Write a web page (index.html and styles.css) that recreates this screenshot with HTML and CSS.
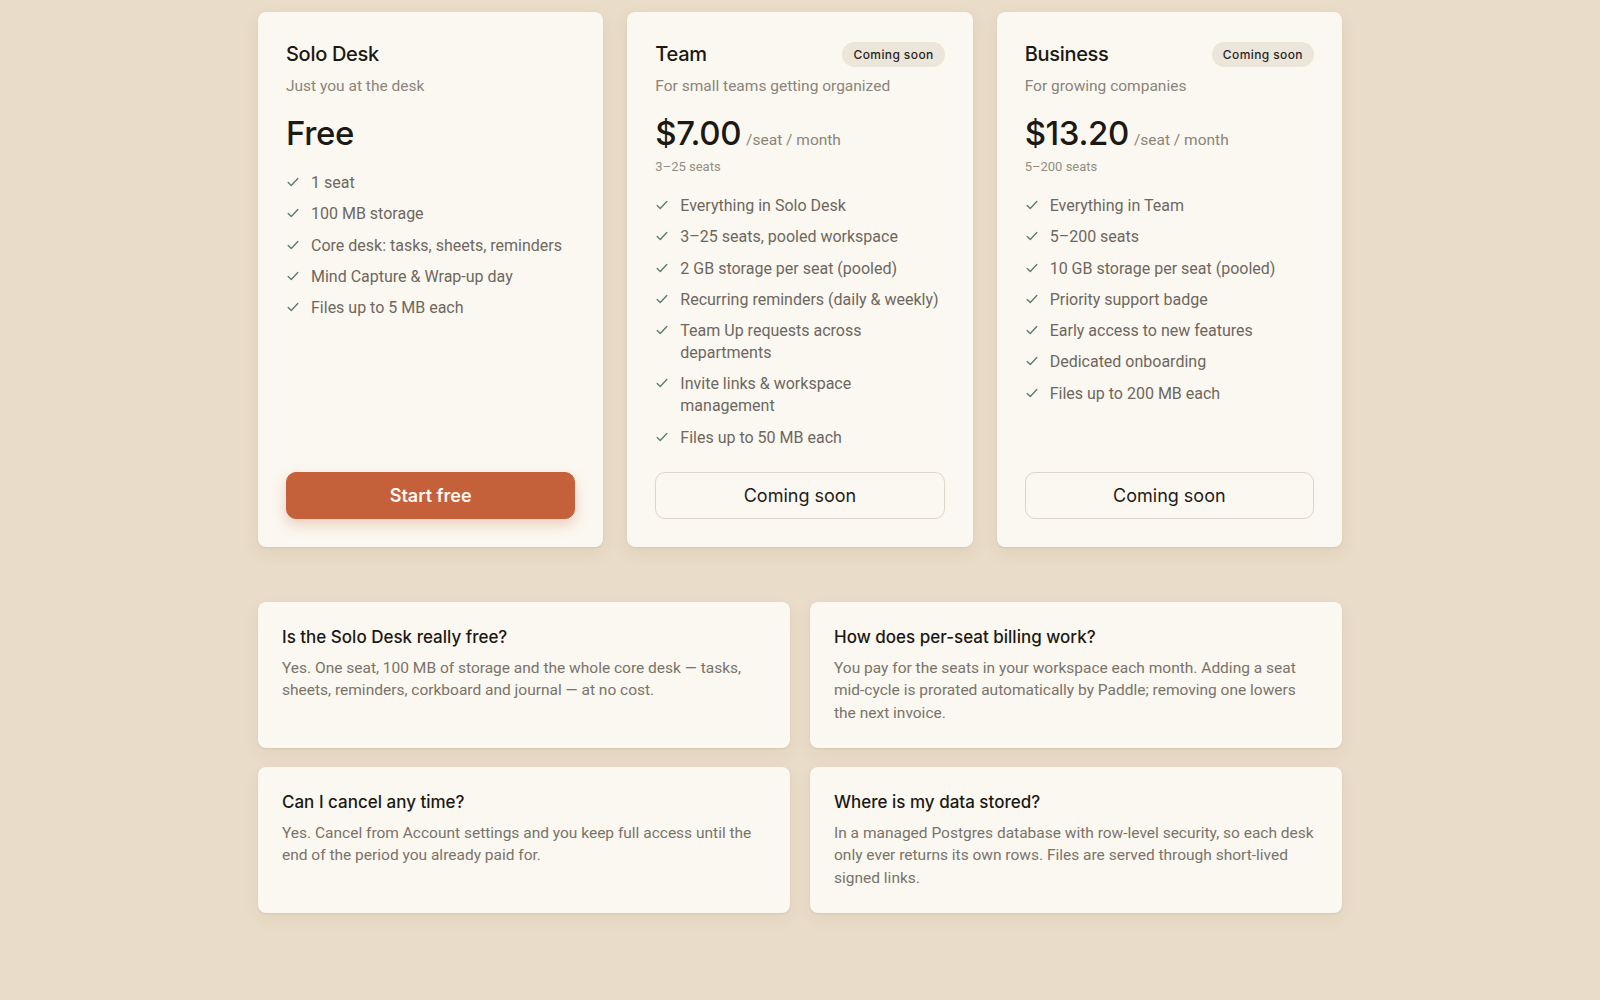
FILE: index.html
```html
<!DOCTYPE html>
<html lang="en">
<head>
    <meta charset="UTF-8">
    <meta name="viewport" content="width=device-width, initial-scale=1.0">
    <title>Pricing</title>
    <link rel="stylesheet" href="styles.css">
</head>
<body>
    <main class="page">
        <section class="plans">
            <div class="plan">
                <div class="plan-head">
                    <h2 class="plan-name">Solo Desk</h2>
                </div>
                <p class="plan-tagline">Just you at the desk</p>
                <div class="price-row">
                    <span class="price">Free</span>
                </div>
                <ul class="features">
                    <li><svg class="check" viewBox="0 0 16 16"><path d="M2.5 8.5l3.5 3.5 7.5-8"/></svg>1 seat</li>
                    <li><svg class="check" viewBox="0 0 16 16"><path d="M2.5 8.5l3.5 3.5 7.5-8"/></svg>100 MB storage</li>
                    <li><svg class="check" viewBox="0 0 16 16"><path d="M2.5 8.5l3.5 3.5 7.5-8"/></svg>Core desk: tasks, sheets, reminders</li>
                    <li><svg class="check" viewBox="0 0 16 16"><path d="M2.5 8.5l3.5 3.5 7.5-8"/></svg>Mind Capture &amp; Wrap-up day</li>
                    <li><svg class="check" viewBox="0 0 16 16"><path d="M2.5 8.5l3.5 3.5 7.5-8"/></svg>Files up to 5 MB each</li>
                </ul>
                <button class="plan-btn primary">Start free</button>
            </div>

            <div class="plan">
                <div class="plan-head">
                    <h2 class="plan-name">Team</h2>
                    <span class="badge">Coming soon</span>
                </div>
                <p class="plan-tagline">For small teams getting organized</p>
                <div class="price-row">
                    <span class="price">$7.00</span>
                    <span class="per">/seat / month</span>
                </div>
                <p class="seats">3–25 seats</p>
                <ul class="features">
                    <li><svg class="check" viewBox="0 0 16 16"><path d="M2.5 8.5l3.5 3.5 7.5-8"/></svg>Everything in Solo Desk</li>
                    <li><svg class="check" viewBox="0 0 16 16"><path d="M2.5 8.5l3.5 3.5 7.5-8"/></svg>3–25 seats, pooled workspace</li>
                    <li><svg class="check" viewBox="0 0 16 16"><path d="M2.5 8.5l3.5 3.5 7.5-8"/></svg>2 GB storage per seat (pooled)</li>
                    <li><svg class="check" viewBox="0 0 16 16"><path d="M2.5 8.5l3.5 3.5 7.5-8"/></svg>Recurring reminders (daily &amp; weekly)</li>
                    <li><svg class="check" viewBox="0 0 16 16"><path d="M2.5 8.5l3.5 3.5 7.5-8"/></svg>Team Up requests across departments</li>
                    <li><svg class="check" viewBox="0 0 16 16"><path d="M2.5 8.5l3.5 3.5 7.5-8"/></svg>Invite links &amp; workspace management</li>
                    <li><svg class="check" viewBox="0 0 16 16"><path d="M2.5 8.5l3.5 3.5 7.5-8"/></svg>Files up to 50 MB each</li>
                </ul>
                <button class="plan-btn">Coming soon</button>
            </div>

            <div class="plan">
                <div class="plan-head">
                    <h2 class="plan-name">Business</h2>
                    <span class="badge">Coming soon</span>
                </div>
                <p class="plan-tagline">For growing companies</p>
                <div class="price-row">
                    <span class="price">$13.20</span>
                    <span class="per">/seat / month</span>
                </div>
                <p class="seats">5–200 seats</p>
                <ul class="features">
                    <li><svg class="check" viewBox="0 0 16 16"><path d="M2.5 8.5l3.5 3.5 7.5-8"/></svg>Everything in Team</li>
                    <li><svg class="check" viewBox="0 0 16 16"><path d="M2.5 8.5l3.5 3.5 7.5-8"/></svg>5–200 seats</li>
                    <li><svg class="check" viewBox="0 0 16 16"><path d="M2.5 8.5l3.5 3.5 7.5-8"/></svg>10 GB storage per seat (pooled)</li>
                    <li><svg class="check" viewBox="0 0 16 16"><path d="M2.5 8.5l3.5 3.5 7.5-8"/></svg>Priority support badge</li>
                    <li><svg class="check" viewBox="0 0 16 16"><path d="M2.5 8.5l3.5 3.5 7.5-8"/></svg>Early access to new features</li>
                    <li><svg class="check" viewBox="0 0 16 16"><path d="M2.5 8.5l3.5 3.5 7.5-8"/></svg>Dedicated onboarding</li>
                    <li><svg class="check" viewBox="0 0 16 16"><path d="M2.5 8.5l3.5 3.5 7.5-8"/></svg>Files up to 200 MB each</li>
                </ul>
                <button class="plan-btn">Coming soon</button>
            </div>
        </section>

        <section class="faq">
            <div class="faq-item">
                <h3>Is the Solo Desk really free?</h3>
                <p>Yes. One seat, 100 MB of storage and the whole core desk — tasks, sheets, reminders, corkboard and journal — at no cost.</p>
            </div>
            <div class="faq-item">
                <h3>How does per-seat billing work?</h3>
                <p>You pay for the seats in your workspace each month. Adding a seat mid&#8209;cycle is prorated automatically by Paddle; removing one lowers the next invoice.</p>
            </div>
            <div class="faq-item">
                <h3>Can I cancel any time?</h3>
                <p>Yes. Cancel from Account settings and you keep full access until the end of the period you already paid for.</p>
            </div>
            <div class="faq-item">
                <h3>Where is my data stored?</h3>
                <p>In a managed Postgres database with row-level security, so each desk only ever returns its own rows. Files are served through short-lived signed links.</p>
            </div>
        </section>
    </main>
</body>
</html>
```

FILE: styles.css
```css
body {
    margin: 0;
    padding: 0;
    background: #e9dcc8;
    font-family: 'Roboto', 'Liberation Sans', sans-serif;
    color: #1f1b16;
}
.page {
    width: 1084px;
    margin: 0 auto;
    padding: 12px 0 60px;
}
.plans {
    display: grid;
    grid-template-columns: repeat(3, 1fr);
    gap: 24px;
}
.plan {
    display: flex;
    flex-direction: column;
    background: #fbf8f1;
    border-radius: 8px;
    padding: 28px;
    box-shadow: 0 1px 2px rgba(90, 70, 40, 0.10), 0 6px 18px rgba(120, 90, 50, 0.08);
}
.plan-head {
    display: flex;
    justify-content: space-between;
    align-items: center;
    height: 28px;
}
.plan-name {
    margin: 0;
    font-family: 'Inter', sans-serif;
    font-size: 20px;
    font-weight: 500;
    line-height: 28px;
    letter-spacing: -0.3px;
    color: #1c1813;
}
.badge {
    background: #ebe5da;
    color: #2a251f;
    font-family: 'Inter', sans-serif;
    font-size: 12px;
    font-weight: 500;
    letter-spacing: 0.4px;
    padding: 5px 11px;
    border-radius: 13px;
}
.plan-tagline {
    margin: 7px 0 0;
    font-size: 15.5px;
    line-height: 22px;
    color: #8b847a;
}
.price-row {
    display: flex;
    align-items: baseline;
    gap: 5px;
    margin-top: 16px;
    height: 40px;
}
.price {
    font-family: 'Inter', sans-serif;
    font-size: 33px;
    font-weight: 500;
    line-height: 40px;
    letter-spacing: -0.4px;
    color: #1c1813;
}
.per {
    font-size: 15.5px;
    color: #8b847a;
}
.seats {
    margin: 5px 0 0;
    font-size: 13px;
    line-height: 18px;
    color: #948d83;
}
.features {
    list-style: none;
    margin: 19px 0 23px;
    padding: 0;
    display: flex;
    flex-direction: column;
    gap: 9.3px;
    flex: 1;
}
.features li {
    display: flex;
    align-items: flex-start;
    gap: 11px;
    font-size: 16px;
    line-height: 22px;
    color: #6e675e;
}
.check {
    flex: none;
    width: 14px;
    height: 14px;
    margin-top: 3px;
    fill: none;
    stroke: #5d7b62;
    stroke-width: 1.5;
    stroke-linecap: round;
    stroke-linejoin: round;
}
.plan-btn {
    height: 47px;
    border-radius: 10px;
    border: 1px solid #ddd6ca;
    background: #fbf8f1;
    font-family: 'Inter', sans-serif;
    font-size: 18px;
    font-weight: 400;
    color: #1f1b16;
    cursor: pointer;
}
.plan-btn.primary {
    background: #c4603a;
    border-color: #c4603a;
    color: #fff8f0;
    font-weight: 600;
    box-shadow: 0 6px 14px rgba(196, 96, 58, 0.28);
}
.faq {
    display: grid;
    grid-template-columns: 1fr 1fr;
    gap: 19px 20px;
    margin-top: 55px;
}
.faq-item {
    background: #fbf8f1;
    border-radius: 8px;
    padding: 24px 22px 24px 24px;
    box-shadow: 0 1px 2px rgba(90, 70, 40, 0.10), 0 6px 18px rgba(120, 90, 50, 0.06);
}
.faq-item h3 {
    margin: 0;
    font-family: 'Inter', sans-serif;
    font-size: 17px;
    font-weight: 500;
    line-height: 22px;
    color: #1c1813;
}
.faq-item p {
    margin: 9px 0 0;
    font-size: 15.5px;
    line-height: 22.4px;
    color: #7a7369;
}
```
